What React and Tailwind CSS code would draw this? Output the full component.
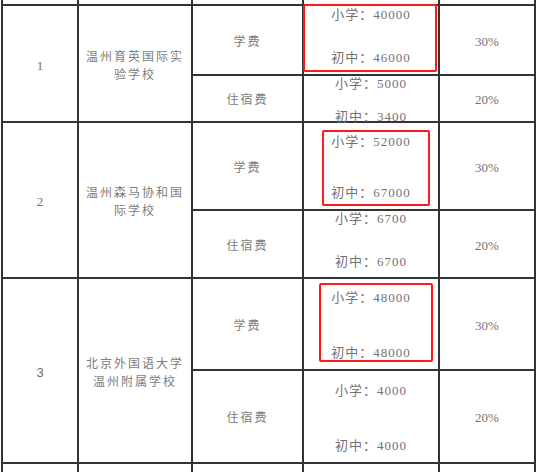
import { Fragment } from "react";

const rows = [
  {
    no: "1",
    noFont: "font-['Liberation_Serif',serif]",
    name: ["温州育英国际实", "验学校"],
    fee: { a: "40000", b: "46000", cls: "pt-[1px] gap-[27px]" },
    box: "left-[-1px] top-[-2px] w-[134px] h-[68px]",
    board: { a: "5000", b: "3400", cls: "pt-0 gap-[17px]" },
  },
  {
    no: "2",
    noFont: "font-['Liberation_Serif',serif]",
    name: ["温州森马协和国", "际学校"],
    fee: { a: "52000", b: "67000", cls: "pt-[11px] gap-[35px]" },
    box: "left-[18px] top-[7px] w-[108px] h-[76px]",
    board: { a: "6700", b: "6700", cls: "pt-0 gap-[27px]" },
  },
  {
    no: "3",
    noFont: "font-['Liberation_Sans',sans-serif]",
    name: ["北京外国语大学", "温州附属学校"],
    fee: { a: "48000", b: "48000", cls: "pt-[11px] gap-[39px]" },
    box: "left-[15px] top-[4px] w-[114px] h-[79px]",
    board: { a: "4000", b: "4000", cls: "pt-[12px] gap-[39px]" },
  },
];

function Amounts({ a, b, cls }) {
  return (
    <div className={`flex flex-col items-center text-[13px] leading-4 tracking-[1px] ${cls}`}>
      <span>小学：{a}</span>
      <span>初中：{b}</span>
    </div>
  );
}

function Label({ children, spaced }) {
  return (
    <div className="bg-white flex items-center justify-center pt-[3px]">
      <span className={spaced ? "text-[12px] tracking-[2px] text-[#7c7c7c]" : "text-[13px]"}>{children}</span>
    </div>
  );
}

export default function App() {
  return (
    <div className="w-[545px] h-[472px] bg-white overflow-hidden text-[#727272] font-['Liberation_Serif','Noto_Sans_CJK_SC',serif]">
      <div className="ml-px w-[535px] bg-[#333] px-[2px] grid grid-cols-[74px_112px_109px_134px_94px] grid-rows-[4px_68px_45px_86px_66px_90px_91px_8px] gap-[2px]">
        <div className="bg-white" />
        <div className="bg-white" />
        <div className="bg-white" />
        <div className="bg-white" />
        <div className="bg-white" />

        {rows.map((r) => (
          <Fragment key={r.no}>
            <div className="bg-white row-span-2 flex items-center justify-center pt-[4px]">
              <span className={`text-[13px] ${r.noFont}`}>{r.no}</span>
            </div>
            <div className="bg-white row-span-2 flex flex-col items-center justify-center pt-[4px] text-[12px] leading-[18px] tracking-[2px] text-[#7c7c7c]">
              <span>{r.name[0]}</span>
              <span>{r.name[1]}</span>
            </div>
            <Label spaced>学费</Label>
            <div className="bg-white relative">
              <Amounts {...r.fee} />
              <div className={`absolute z-10 border-2 border-[#ff1a1a] rounded-[2px] ${r.box}`} />
            </div>
            <Label>30%</Label>
            <Label spaced>住宿费</Label>
            <div className="bg-white">
              <Amounts {...r.board} />
            </div>
            <Label>20%</Label>
          </Fragment>
        ))}

        <div className="bg-white" />
        <div className="bg-white" />
        <div className="bg-white" />
        <div className="bg-white" />
        <div className="bg-white" />
      </div>
    </div>
  );
}
